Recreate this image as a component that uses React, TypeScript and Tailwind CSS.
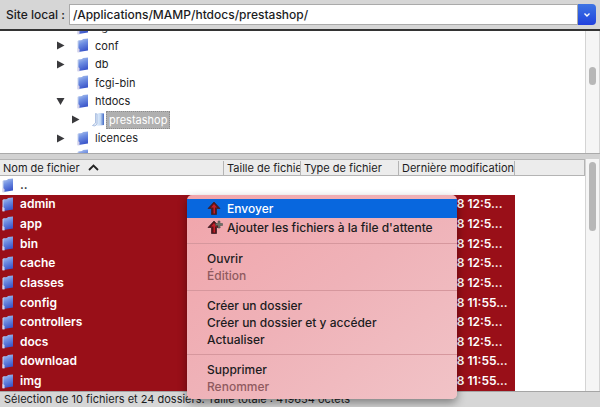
import clsx from 'clsx'

interface TreeNode {
  name: string
  state?: 'open' | 'closed'
  child?: boolean
}

interface FileEntry {
  name: string
  date: string
}

const tree: TreeNode[] = [
  { name: 'cgi-bin' },
  { name: 'conf', state: 'closed' },
  { name: 'db', state: 'closed' },
  { name: 'fcgi-bin' },
  { name: 'htdocs', state: 'open' },
  { name: 'prestashop', state: 'closed', child: true },
  { name: 'licences', state: 'closed' },
  { name: 'logs' },
]

const files: FileEntry[] = [
  { name: 'admin', date: '11/01/2018 12:5...' },
  { name: 'app', date: '11/01/2018 12:5...' },
  { name: 'bin', date: '11/01/2018 12:5...' },
  { name: 'cache', date: '11/01/2018 12:5...' },
  { name: 'classes', date: '11/01/2018 12:5...' },
  { name: 'config', date: '11/01/2018 11:55...' },
  { name: 'controllers', date: '11/01/2018 12:5...' },
  { name: 'docs', date: '11/01/2018 12:5...' },
  { name: 'download', date: '11/01/2018 11:55...' },
  { name: 'img', date: '11/01/2018 11:55...' },
]

const menuGroups = [
  [{ label: 'Ouvrir' }, { label: 'Édition', disabled: true }],
  [{ label: 'Créer un dossier' }, { label: 'Créer un dossier et y accéder' }, { label: 'Actualiser' }],
  [{ label: 'Supprimer' }, { label: 'Renommer', disabled: true }],
]

function FolderIcon() {
  return (
    <svg width="12" height="15" viewBox="0 0 12 15" className="shrink-0" aria-hidden="true">
      <defs>
        <linearGradient id="folder" x1="0" y1="0" x2="0.3" y2="1">
          <stop offset="0" stopColor="#b4c8ee" />
          <stop offset="0.45" stopColor="#6f8fe2" />
          <stop offset="1" stopColor="#3d58cb" />
        </linearGradient>
      </defs>
      <path d="M0.5 3 L2.5 2 L2.5 14.5 L0.5 14Z" fill="#c5d2ee" />
      <path d="M1.5 2.5 L5 2 L6 1 L11 0.5 L11 12.5 L1.5 14Z" fill="url(#folder)" />
      <path d="M0.5 10 L2.5 11 L2.5 14 L0.5 14.5Z" fill="#d5d2ea" />
    </svg>
  )
}

function OpenFolderIcon() {
  return (
    <svg width="13" height="15" viewBox="0 0 13 15" className="shrink-0" aria-hidden="true">
      <defs>
        <linearGradient id="open-folder" x1="0" y1="0" x2="1" y2="0">
          <stop offset="0" stopColor="#edf4fd" />
          <stop offset="0.55" stopColor="#c3d9f4" />
          <stop offset="1" stopColor="#3f67c4" />
        </linearGradient>
      </defs>
      <path d="M5 1.5 L8 1 L12 1.5 L12 13 L4 14Z" fill="url(#open-folder)" />
      <path d="M3.5 1.5 L5 2 L5 12 L3 14 L0.5 13.5 L3.5 11Z" fill="#e4ecf8" stroke="#93aed8" strokeWidth="0.7" />
    </svg>
  )
}

function Disclosure({ open }: { open: boolean }) {
  return (
    <svg width="9" height="9" viewBox="0 0 9 9" aria-hidden="true">
      <path d={open ? 'M0.5 1 H8.5 L4.5 8Z' : 'M1 0.5 V8.5 L8.5 4.5Z'} fill="#3a3a3d" />
    </svg>
  )
}

function UploadIcon({ plus = false }: { plus?: boolean }) {
  return (
    <svg width="16" height="15" viewBox="0 0 16 15" className="shrink-0" aria-hidden="true">
      <path d="M7 1 L13 7.5 H9.5 V13.5 H4.5 V7.5 H1Z" fill="#5a1418" stroke="#3d2028" strokeWidth="0.8" />
      <path d="M7 3 L10 6.5 H8 V12.5 H6.5 V6.5 H4Z" fill="#c3202a" />
      {plus && <path d="M11 1 H13 V3.5 H15.5 V5.5 H13 V8 H11 V5.5 H8.5 V3.5 H11Z" fill="#6d7369" stroke="#454a44" strokeWidth="0.5" />}
    </svg>
  )
}

function Scrollbar({ thumb }: { thumb: string }) {
  return (
    <div className="w-[15px] shrink-0 border-x border-[#d4d4d4] bg-[#f5f5f5] px-[3px]">
      <div className={clsx('rounded-full bg-[#b7b7b7]', thumb)} />
    </div>
  )
}

function LocalPath() {
  return (
    <div className="flex h-[31px] shrink-0 items-center border-b-2 border-[#333] bg-[#d6d6d6] pr-1 pl-[6px]">
      <label htmlFor="path" className="w-[63px] text-xs font-medium whitespace-nowrap">
        Site local :
      </label>
      <input
        id="path"
        defaultValue="/Applications/MAMP/htdocs/prestashop/"
        className="h-[21px] min-w-0 flex-1 border border-[#aaa] bg-white px-[3px] text-xs font-medium outline-none"
      />
      <button aria-label="Historique" className="flex h-[21px] w-[18px] items-center justify-center rounded-r bg-linear-to-b from-[#3f74e3] to-[#2340dd]">
        <svg width="8" height="6" viewBox="0 0 8 6" aria-hidden="true">
          <path d="M1.5 1.5 L4 4 L6.5 1.5" fill="none" stroke="white" strokeWidth="1.4" />
        </svg>
      </button>
    </div>
  )
}

function FolderTree() {
  return (
    <div className="flex h-[122px] shrink-0 overflow-hidden bg-white">
      <ul className="-mt-[13px] flex h-[148px] flex-1 flex-col text-[11px]">
        {tree.map((node) => (
          <li key={node.name} className={clsx('flex flex-1 items-center', node.child ? 'pl-[71px]' : 'pl-14')}>
            <span className="w-[21px]">{node.state && <Disclosure open={node.state === 'open'} />}</span>
            {node.child ? <OpenFolderIcon /> : <FolderIcon />}
            {node.child ? (
              <span className="ml-px border border-dotted border-[#8d8d8d] bg-[#b0b0b0] px-[2px] leading-4 text-white">{node.name}</span>
            ) : (
              <span className="ml-[6px]">{node.name}</span>
            )}
          </li>
        ))}
      </ul>
      <Scrollbar thumb="mt-9 h-[18px]" />
    </div>
  )
}

function FileList() {
  return (
    <div className="flex min-h-0 flex-1 bg-white">
      <table className="h-full w-full flex-1 table-fixed border-collapse text-left">
        <colgroup>
          <col className="w-[224px]" />
          <col className="w-[77px]" />
          <col className="w-[98px]" />
          <col className="w-[116px]" />
          <col />
        </colgroup>
        <thead className="bg-[#ececec] text-[11px]">
          <tr className="h-4 border-y border-[#b4b4b4] whitespace-nowrap">
            <th className="p-0 pl-[3px] font-normal">
              <button className="flex w-full items-center gap-2 border-r border-[#b4b4b4] leading-[14px]">
                Nom de fichier
                <svg width="11" height="7" viewBox="0 0 11 7" aria-hidden="true">
                  <path d="M1 6 L5.5 1.5 L10 6" fill="none" stroke="#222" strokeWidth="1.8" />
                </svg>
              </button>
            </th>
            {['Taille de fichier', 'Type de fichier', 'Dernière modification'].map((label) => (
              <th key={label} className="p-0 pl-[3px] font-normal">
                <button className="block w-full overflow-hidden border-r border-[#b4b4b4] text-left leading-[14px]">{label}</button>
              </th>
            ))}
            <th className="border-r border-[#b4b4b4] p-0" />
          </tr>
        </thead>
        <tbody className="text-xs leading-4 font-semibold whitespace-nowrap">
          <tr className="h-[19px]">
            <td className="p-0 pl-[2px]">
              <div className="flex items-center gap-[6px]">
                <FolderIcon />
                <span>..</span>
              </div>
            </td>
          </tr>
          {files.map((file) => (
            <tr key={file.name} className="text-white">
              <td className="bg-[#990f18] p-0 pl-[2px]">
                <div className="flex items-center gap-[6px]">
                  <FolderIcon />
                  <span>{file.name}</span>
                </div>
              </td>
              <td className="bg-[#990f18] p-0" />
              <td className="bg-[#990f18] p-0" />
              <td className="bg-[#990f18] p-0 pl-[5px]">{file.date}</td>
              <td className="p-0" />
            </tr>
          ))}
        </tbody>
      </table>
      <Scrollbar thumb="mt-[3px] h-[69px]" />
    </div>
  )
}

function ContextMenu() {
  return (
    <div
      role="menu"
      className="absolute top-[195px] left-[187px] w-[270px] rounded-[5px] bg-linear-to-br from-[#f1a5ab] via-[#efb2b8] to-[#f1c3c7] py-1 text-xs font-medium shadow-[0_4px_10px_rgba(0,0,0,0.4)]"
    >
      <button role="menuitem" className="flex h-[19px] w-full items-center gap-1 bg-[#0867de] pl-5 text-white">
        <UploadIcon />
        Envoyer
      </button>
      <button role="menuitem" className="flex h-[19px] w-full items-center gap-1 pl-5 whitespace-nowrap">
        <UploadIcon plus />
        Ajouter les fichiers à la file d'attente
      </button>
      {menuGroups.map((group) => (
        <div key={group[0].label}>
          <hr className="my-[6px] border-[#d6979d]" />
          {group.map((item) => (
            <button
              key={item.label}
              role="menuitem"
              disabled={item.disabled}
              className="block h-[17px] w-full pl-5 text-left leading-4 disabled:text-[#8f5a5f]"
            >
              {item.label}
            </button>
          ))}
        </div>
      ))}
    </div>
  )
}

export default function App() {
  return (
    <div className="relative flex h-screen flex-col overflow-hidden bg-[#d6d6d6] font-['Inter',sans-serif] text-[#1c1c1e]">
      <LocalPath />
      <FolderTree />
      <div className="h-[6px] shrink-0 border-t border-[#aaa] bg-[#d2d2d2]" />
      <FileList />
      <footer className="h-4 shrink-0 border-t border-[#a5a5a5] bg-[#d6d6d6] pl-1 text-[11px] leading-[15px]">
        Sélection de 10 fichiers et 24 dossiers. Taille totale : 419654 octets
      </footer>
      <ContextMenu />
    </div>
  )
}
